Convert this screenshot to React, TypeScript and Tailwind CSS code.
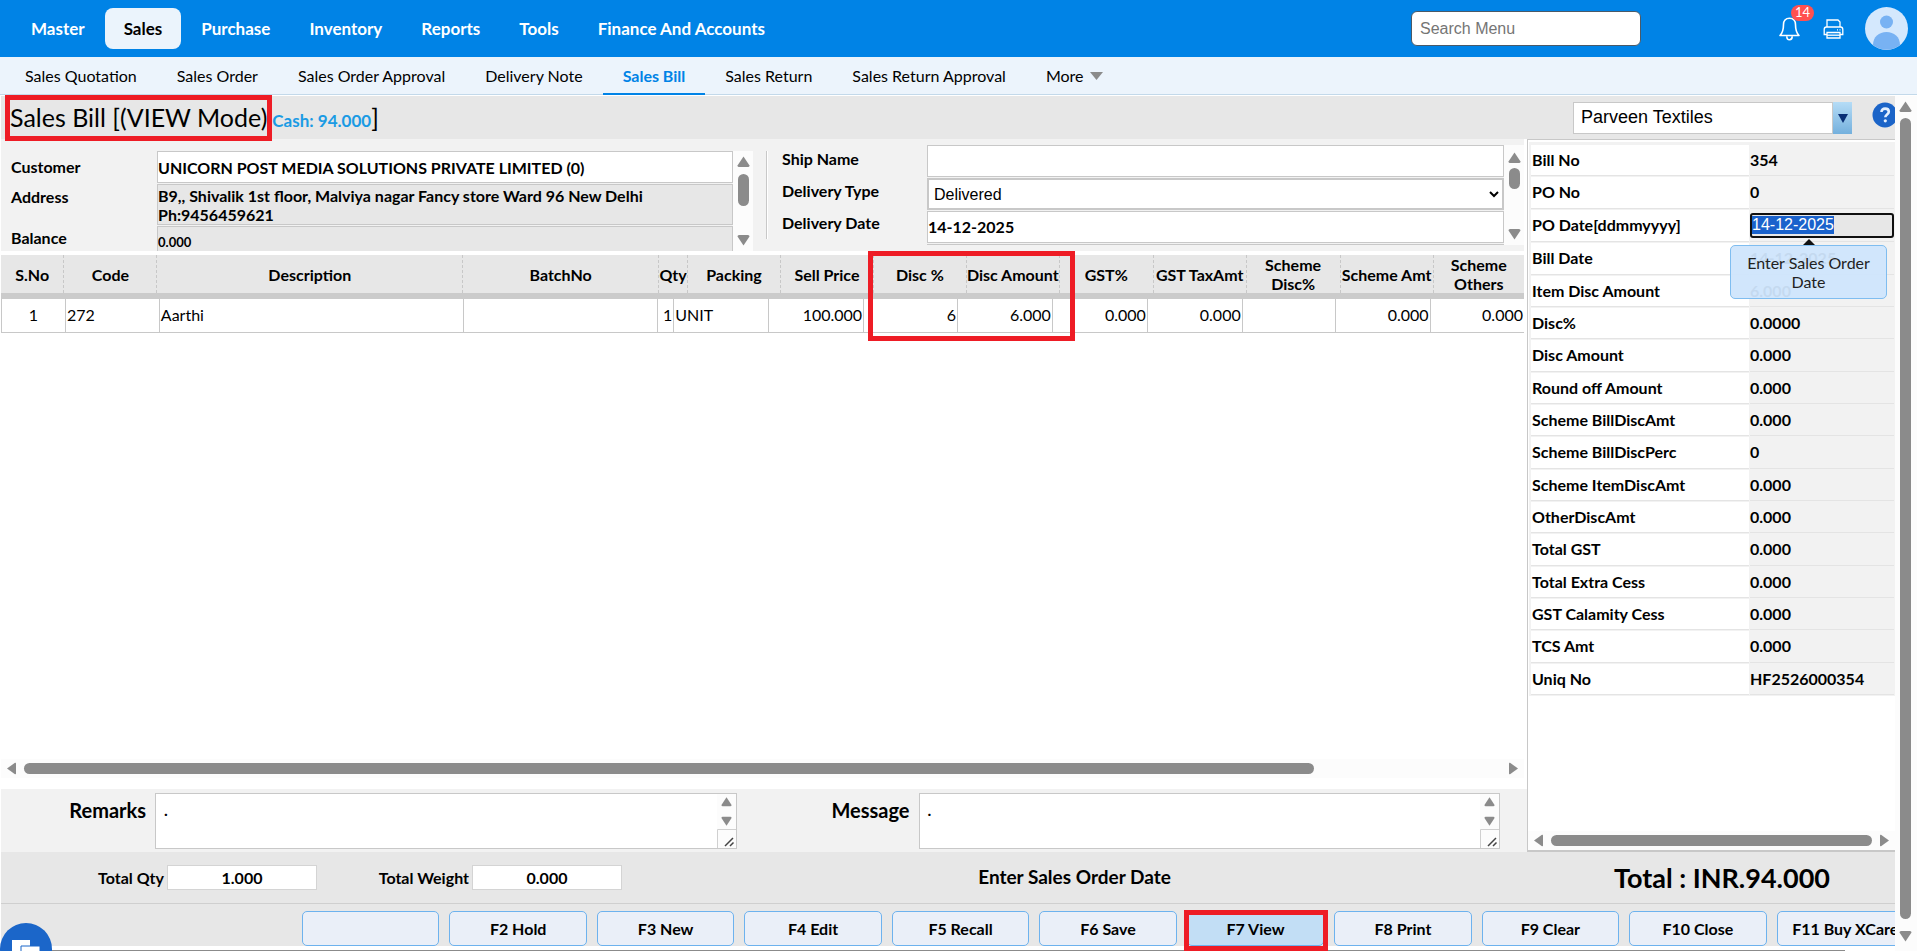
import { useEffect, useRef } from "react";
import clsx from "clsx";

interface Column {
  title: string;
  value: string;
  head: number;
  cell: number;
  align: string;
}

const menus = ["Master", "Sales", "Purchase", "Inventory", "Reports", "Tools", "Finance And Accounts"];

const subMenus = [
  "Sales Quotation",
  "Sales Order",
  "Sales Order Approval",
  "Delivery Note",
  "Sales Bill",
  "Sales Return",
  "Sales Return Approval"
];

// head and cell are relative widths, the header and the rows are sized apart
const columns: Column[] = [
  { title: "S.No", value: "1", head: 63, cell: 64, align: "text-center" },
  { title: "Code", value: "272", head: 93, cell: 94, align: "text-left" },
  { title: "Description", value: "Aarthi", head: 306, cell: 304, align: "text-left" },
  { title: "BatchNo", value: "", head: 196, cell: 195, align: "text-left" },
  { title: "Qty", value: "1", head: 29, cell: 16, align: "text-right" },
  { title: "Packing", value: "UNIT", head: 93, cell: 95, align: "text-left" },
  { title: "Sell Price", value: "100.000", head: 93, cell: 95, align: "text-right" },
  { title: "Disc %", value: "6", head: 93, cell: 94, align: "text-right" },
  { title: "Disc Amount", value: "6.000", head: 93, cell: 95, align: "text-right" },
  { title: "GST%", value: "0.000", head: 94, cell: 95, align: "text-right" },
  { title: "GST TaxAmt", value: "0.000", head: 93, cell: 95, align: "text-right" },
  { title: "Scheme Disc%", value: "", head: 94, cell: 93, align: "text-right" },
  { title: "Scheme Amt", value: "0.000", head: 93, cell: 95, align: "text-right" },
  { title: "Scheme Others", value: "0.000", head: 91, cell: 94, align: "text-right" }
];

const summary = [
  ["Bill No", "354"],
  ["PO No", "0"],
  ["PO Date[ddmmyyyy]", "14-12-2025"],
  ["Bill Date", "14-12-2025"],
  ["Item Disc Amount", "6.000"],
  ["Disc%", "0.0000"],
  ["Disc Amount", "0.000"],
  ["Round off Amount", "0.000"],
  ["Scheme BillDiscAmt", "0.000"],
  ["Scheme BillDiscPerc", "0"],
  ["Scheme ItemDiscAmt", "0.000"],
  ["OtherDiscAmt", "0.000"],
  ["Total GST", "0.000"],
  ["Total Extra Cess", "0.000"],
  ["GST Calamity Cess", "0.000"],
  ["TCS Amt", "0.000"],
  ["Uniq No", "HF2526000354"]
];

const actions = [
  "",
  "F2 Hold",
  "F3 New",
  "F4 Edit",
  "F5 Recall",
  "F6 Save",
  "F7 View",
  "F8 Print",
  "F9 Clear",
  "F10 Close",
  "F11 Buy XCare"
];

function Arrow({ dir, size = 13 }: { dir: "up" | "down" | "left" | "right"; size?: number }) {
  const paths = {
    up: "M6.5 1.5 12.5 10.5Q12.5 12 11 12H2Q.5 12 .5 10.5Z",
    down: "M6.5 11.5 12.5 2.5Q12.5 1 11 1H2Q.5 1 .5 2.5Z",
    left: "M2 6.5 10 .8Q11 .5 11 1.5V11.5Q11 12.5 10 12.2Z",
    right: "M11 6.5 3 .8Q2 .5 2 1.5V11.5Q2 12.5 3 12.2Z"
  };
  return (
    <svg width={size} height={size} viewBox="0 0 13 13" className="shrink-0 text-[#8b8b8b]">
      <path d={paths[dir]} fill="currentColor" />
    </svg>
  );
}

function HelpIcon() {
  return (
    <svg width="26" height="26" viewBox="0 0 26 26" className="shrink-0">
      <circle cx="13" cy="13" r="12.5" fill="#1b64c8" />
      <path
        d="M9.5 10c0-2.2 1.500-3.400 3.600-3.400 2.200 0 3.700 1.200 3.700 3.100 0 2.700-3.500 2.800-3.500 5.600"
        fill="none"
        stroke="#e4f0ff"
        strokeWidth="2.6"
      />
      <circle cx="13.3" cy="18.800" r="1.6" fill="#e4f0ff" />
    </svg>
  );
}

function TopBar() {
  return (
    <header className="flex h-[57px] shrink-0 items-center bg-[#0083e6] pl-3 pr-[9px]">
      <nav className="flex flex-1 gap-px">
        {menus.map((menu) => (
          <a
            key={menu}
            href="#"
            className={clsx(
              "flex h-[41px] items-center rounded-lg px-[19px] text-[17px] font-bold",
              menu === "Sales" ? "bg-[#ebf4fc] text-black" : "text-white"
            )}
          >
            {menu}
          </a>
        ))}
      </nav>
      <input
        type="text"
        placeholder="Search Menu"
        aria-label="Search Menu"
        className="mr-[138px] h-[35px] w-[230px] rounded-md border border-[#4a5a68] bg-white px-2 font-[Liberation_Sans,Arial,sans-serif] text-base placeholder:text-[#757575]"
      />
      <button type="button" aria-label="Notifications" className="relative">
        <svg width="21" height="24" viewBox="0 0 21 24" fill="none" stroke="#fff" strokeWidth="1.6">
          <path d="M10.5 1.2c-4 0-6 3-6 6.3 0 6-1 8.500-3.500 11h19c-2.500-2.500-3.500-5-3.500-11 0-3.300-2-6.300-6-6.300Z" strokeLinejoin="round" />
          <path d="M7.800 19.200c0 4.800 5.400 4.800 5.400 0" />
        </svg>
        <span className="absolute -top-3 left-3 flex h-4 w-[23px] items-center justify-center rounded-lg bg-[#ff5050] text-[13px] text-white">
          14
        </span>
      </button>
      <button type="button" aria-label="Print" className="ml-[23px] mr-[21px]">
        <svg width="21" height="20" viewBox="0 0 21 20" fill="none" stroke="#fff" strokeWidth="1.3">
          <path d="M4 8V1h11l2 2v5" />
          <path d="M4 15.500H1.200V10.500Q1.200 8 3.500 8h14q2.300 0 2.300 2.500v5H17" />
          <path d="M4 13.500h13v5.500H4zM14 10.800h1M16.500 10.800h1" />
          <path d="M4 16.200h13" />
        </svg>
      </button>
      <button type="button" aria-label="Profile">
        <svg width="43" height="43" viewBox="0 0 43 43">
          <circle cx="21.500" cy="21.500" r="21.500" fill="#d4e8fd" />
          <circle cx="21.500" cy="15" r="6.500" fill="#78b2f3" />
          <path d="M8 38c0-8 6-13 13.500-13S35 30 35 38a21.500 21.500 0 0 1-27 0Z" fill="#78b2f3" />
        </svg>
      </button>
    </header>
  );
}

function SubMenu() {
  return (
    <nav className="mb-px flex h-[38px] shrink-0 border-b border-[#c3d9ea] bg-[#ecf4fc] pl-[5px] text-base">
      {subMenus.map((menu) => (
        <a
          key={menu}
          href="#"
          className={clsx(
            "flex items-center px-5",
            menu === "Sales Bill" && "-mb-px border-b-2 border-[#0083e6] pt-px font-bold text-[#0083e6]"
          )}
        >
          {menu}
        </a>
      ))}
      <button type="button" className="flex items-center gap-1.5 px-5">
        More
        <svg width="13" height="8" viewBox="0 0 13 8">
          <path d="M0 0h13L6.500 8z" fill="#8b8b8b" />
        </svg>
      </button>
    </nav>
  );
}

function TitleBar() {
  return (
    <div className="flex h-[43px] shrink-0 items-center overflow-x-clip bg-[#e7e7e7]">
      <h1 className="flex flex-1 items-center text-[25px]">
        <span className="relative ml-1 flex h-[46px] items-center border-[5px] border-[#ee1c25]">
          Sales Bill [(VIEW Mode)
        </span>
        <span className="pt-1.5 text-[17px] font-bold text-[#1b9be4]">Cash: 94.000</span>
        <span>]</span>
      </h1>
      <div className="mr-5 flex h-8 w-[279px]">
        <select
          aria-label="Company"
          className="flex-1 appearance-none border border-[#c8c8c8] bg-white px-[7px] pb-0.5 font-[Liberation_Sans,Arial,sans-serif] text-lg"
        >
          <option>Parveen Textiles</option>
        </select>
        <button
          type="button"
          aria-label="Choose company"
          className="flex w-[19px] items-center justify-center bg-linear-to-b from-[#b5dcf6] to-[#74b0dd] pt-0.5"
        >
          <svg width="10" height="9" viewBox="0 0 10 9">
            <path d="M0 0h10L5 9z" fill="#082e75" />
          </svg>
        </button>
      </div>
      <button type="button" aria-label="Help" className="-mr-[3px] mb-1.5">
        <HelpIcon />
      </button>
    </div>
  );
}

function BillForm() {
  return (
    <section className="mr-[3px] grid h-28 shrink-0 grid-cols-[767fr_756fr] overflow-hidden bg-[#f2f2f2] font-bold">
      <div className="mt-3 flex overflow-hidden">
        <div className="grid flex-1 grid-cols-[156px_1fr] content-start gap-y-px text-base">
          <label htmlFor="customer" className="pl-2.5 pt-1">
            Customer
          </label>
          <input
            id="customer"
            defaultValue="UNICORN POST MEDIA SOLUTIONS PRIVATE LIMITED (0)"
            className="h-8 border border-[#c8c8c8] bg-white"
          />
          <label htmlFor="address" className="pl-2.5 pt-px">
            Address
          </label>
          <textarea
            id="address"
            readOnly
            defaultValue={"B9,, Shivalik 1st floor, Malviya nagar Fancy store Ward 96 New Delhi\nPh:9456459621"}
            className="h-[41px] resize-none overflow-hidden border border-[#c8c8c8] bg-[#e7e7e7] pt-px leading-[19px]"
          />
          <label htmlFor="balance" className="pl-2.5">
            Balance
          </label>
          <input
            id="balance"
            readOnly
            defaultValue="0.000"
            className="h-8 border border-[#c8c8c8] bg-[#e7e7e7] text-[13px]"
          />
        </div>
        <div className="flex w-5 flex-col items-center bg-[#fcfcfc] pb-1 pt-1">
          <Arrow dir="up" />
          <div className="mt-1.5 h-8 w-[11px] rounded-full bg-[#8b8b8b]" />
          <span className="flex-1" />
          <Arrow dir="down" />
        </div>
        <div className="mb-3 ml-[13px] w-0.5 border-x border-l-[#c8c8c8] border-r-white" />
      </div>
      <div className="mb-1.5 mt-1.5 flex overflow-hidden">
        <div className="grid flex-1 grid-cols-[159px_1fr] content-start gap-y-px text-base">
          <label htmlFor="ship" className="pl-3.5 pt-0.5">
            Ship Name
          </label>
          <input id="ship" className="h-8 border border-[#c8c8c8] bg-white" />
          <label htmlFor="delivery-type" className="pl-3.5 pt-px">
            Delivery Type
          </label>
          <select
            id="delivery-type"
            className="h-8 border-2 border-[#c8c8c8] bg-white pl-px font-[Liberation_Sans,Arial,sans-serif] font-normal"
          >
            <option>Delivered</option>
          </select>
          <label htmlFor="delivery-date" className="pl-3.5">
            Delivery Date
          </label>
          <input id="delivery-date" defaultValue="14-12-2025" className="h-8 border border-[#c8c8c8] bg-white pb-0.5" />
          <span />
          <input aria-label="Delivery note" className="h-8 border border-[#c8c8c8] bg-white" />
        </div>
        <div className="flex w-5 flex-col items-center bg-[#fcfcfc] pb-1 pt-1.5">
          <Arrow dir="up" />
          <div className="mt-1 h-[21px] w-[11px] rounded-full bg-[#8b8b8b]" />
          <span className="flex-1" />
          <Arrow dir="down" />
        </div>
      </div>
    </section>
  );
}

function ItemGrid() {
  return (
    <section className="relative mr-[3px] mt-1 flex flex-1 flex-col">
      <table className="w-full table-fixed border-b-[6px] border-[#cbcbcb] bg-[#e7e7e7] text-base leading-[19px]">
        <colgroup>
          {columns.map((col) => (
            <col key={col.title} style={{ width: `${(col.head / 1524) * 100}%` }} />
          ))}
        </colgroup>
        <thead>
          <tr className="h-[38px]">
            {columns.map((col) => (
              <th
                key={col.title}
                className={clsx(
                  "border-r border-dashed border-[#c8c8c8] py-0 text-center font-bold last:border-r-0",
                  !col.title.startsWith("Scheme ") || col.title === "Scheme Amt" ? "whitespace-nowrap px-0" : "px-3"
                )}
              >
                {col.title}
              </th>
            ))}
          </tr>
        </thead>
      </table>
      <table className="w-full table-fixed border-l border-[#c8c8c8] text-base">
        <colgroup>
          {columns.map((col) => (
            <col key={col.title} style={{ width: `${(col.cell / 1524) * 100}%` }} />
          ))}
        </colgroup>
        <tbody>
          <tr className="h-[33px]">
            {columns.map((col) => (
              <td
                key={col.title}
                className={clsx("border-b border-r border-[#c8c8c8] px-px last:border-r-0", col.align)}
              >
                {col.value}
              </td>
            ))}
          </tr>
        </tbody>
      </table>
      <div className="absolute -top-1 left-[867px] h-[90px] w-[207px] border-[5px] border-[#ee1c25]" />
      <div className="mb-[11px] mt-auto flex h-[19px] items-center bg-[#fcfcfc] px-1">
        <Arrow dir="left" />
        <div className="ml-1.5 mr-[193px] h-[11px] flex-1 rounded-full bg-[#8b8b8b]" />
        <Arrow dir="right" />
      </div>
    </section>
  );
}

function NoteBox({ id, label }: { id: string; label: string }) {
  return (
    <div className="flex flex-1">
      <label htmlFor={id} className="w-[154px] pr-[9px] pt-[5px] text-right text-xl leading-6 font-bold">
        {label}
      </label>
      <div className="flex h-14 flex-1 border border-[#c8c8c8] bg-white">
        <textarea
          id={id}
          defaultValue="."
          className="flex-1 resize-none overflow-hidden px-2 py-1 text-base font-bold"
        />
        <div className="flex w-[19px] flex-col items-center bg-[#fcfcfc]">
          <span className="flex flex-1 flex-col justify-between py-0.5">
            <Arrow dir="up" size={11} />
            <Arrow dir="down" size={11} />
          </span>
          <svg width="19" height="19" viewBox="0 0 19 19" fill="none">
            <path d="M.5 19V.500H19" stroke="#d0d0d0" />
            <path d="M8 17l8-8M13 17l3.500-3.500" stroke="#444" strokeWidth="1.500" />
          </svg>
        </div>
      </div>
    </div>
  );
}

function SummaryPanel() {
  const dateRef = useRef<HTMLInputElement>(null);

  useEffect(() => {
    dateRef.current?.focus();
    dateRef.current?.select();
  }, []);

  return (
    <aside className="flex w-[368px] shrink-0 flex-col overflow-hidden border-b-2 border-l border-t border-[#c8c8c8] bg-white">
      <div className="ml-px mt-0.5 bg-[#f2f2f2] pl-px pt-0.5">
        <table className="h-[552px] w-full border-separate border-spacing-x-px border-spacing-y-px text-base font-bold">
          <tbody>
            {summary.map(([label, value], index) => (
              <tr key={label}>
                <th scope="row" className="w-[218px] border-b border-[#e4e4e4] bg-white p-0 pl-px text-left font-bold">
                  {label}
                </th>
                <td className="border-b border-[#e4e4e4] p-0">
                  {index === 2 ? (
                    <div className="relative flex">
                      <input
                        ref={dateRef}
                        aria-label={label}
                        defaultValue={value}
                        className="h-[25px] w-full rounded-[3px] border-2 border-[#101010] bg-[#e7e7e7] font-[Liberation_Sans,Arial,sans-serif] font-normal outline-none selection:bg-[#1a62cc] selection:text-white"
                      />
                      <div className="absolute -left-5 top-[26px] flex w-[157px] flex-col items-center">
                        <svg width="12" height="6" viewBox="0 0 12 6">
                          <path d="M6 0l6 6H0z" fill="#111" />
                        </svg>
                        <div
                          role="tooltip"
                          className="w-full rounded-[5px] border border-[#7fbdf0] bg-[#cfe5fc]/95 px-2 py-[7px] text-center font-normal leading-[19px] text-[#222]"
                        >
                          Enter Sales Order Date
                        </div>
                      </div>
                    </div>
                  ) : (
                    value
                  )}
                </td>
              </tr>
            ))}
          </tbody>
        </table>
      </div>
      <div className="mt-auto flex h-[19px] items-center bg-[#fcfcfc] px-1">
        <Arrow dir="left" />
        <div className="mx-1.5 h-[11px] flex-1 rounded-full bg-[#8b8b8b]" />
        <Arrow dir="right" />
      </div>
    </aside>
  );
}

function Totals() {
  return (
    <div className="flex h-[52px] shrink-0 items-center border-b border-[#cfcfcf] bg-[#e7e7e7] text-base font-bold">
      <label htmlFor="total-qty" className="w-[166px] pr-[3px] text-right">
        Total Qty
      </label>
      <input
        id="total-qty"
        readOnly
        defaultValue="1.000"
        className="h-[25px] w-[150px] border border-[#d4d4d4] bg-white text-center"
      />
      <label htmlFor="total-weight" className="w-[155px] pr-[3px] text-right">
        Total Weight
      </label>
      <input
        id="total-weight"
        readOnly
        defaultValue="0.000"
        className="h-[25px] w-[150px] border border-[#d4d4d4] bg-white text-center"
      />
      <p className="flex-1 pr-[22px] text-center text-[19px]">Enter Sales Order Date</p>
      <p className="w-[346px] pt-0.5 text-center text-[27px]">Total : INR.94.000</p>
    </div>
  );
}

function ActionBar() {
  return (
    <div className="flex h-[42px] shrink-0 overflow-hidden bg-[#e7e7e7] pl-[301px] pt-[7px]">
      <div className="-mr-[19px] flex flex-1 gap-2.5">
        {actions.map((label) => (
          <button
            key={label}
            type="button"
            className={clsx(
              "h-[35px] flex-1 basis-0 whitespace-nowrap rounded-[5px] border border-[#6db2ee] text-base font-bold",
              label === "F7 View" ? "bg-[#c2def5]" : "bg-[#eaeff8]"
            )}
          >
            {label}
          </button>
        ))}
      </div>
    </div>
  );
}

export default function App() {
  return (
    <div className="relative flex h-screen flex-col overflow-hidden bg-white font-[Lato,sans-serif] text-black">
      <TopBar />
      <SubMenu />
      <main className="flex min-h-0 flex-1">
        <div className="flex min-w-0 flex-1 flex-col pl-px">
          <TitleBar />
          <div className="flex min-h-0 flex-1">
            <div className="flex min-w-0 flex-1 flex-col">
              <BillForm />
              <ItemGrid />
              <div className="flex h-[63px] shrink-0 gap-7 bg-[#f2f2f2] pr-[27px] pt-1">
                <NoteBox id="remarks" label="Remarks" />
                <NoteBox id="message" label="Message" />
              </div>
            </div>
            <SummaryPanel />
          </div>
          <Totals />
          <ActionBar />
          <div className="flex h-[5px] shrink-0 items-end pr-[50px]">
            <div className="h-px flex-1 bg-[#8b8b8b]" />
          </div>
        </div>
        <div className="flex w-[22px] flex-col items-center bg-[#fcfcfc] pb-2 pr-3 pl-2.5 pt-1">
          <Arrow dir="up" />
          <div className="mb-[11px] mt-[5px] w-[11px] flex-1 rounded-full bg-[#8b8b8b]" />
          <Arrow dir="down" />
        </div>
      </main>
      <div className="absolute bottom-0 left-[1184px] h-[41px] w-36 border-[5px] border-[#ee1c25]" />
      <button type="button" aria-label="Chat" className="absolute -bottom-6 left-0">
        <svg width="52" height="52" viewBox="0 0 52 52">
          <circle cx="26" cy="26" r="26" fill="#1b66c9" />
          <path d="M12 17h18v14H18l-6 5z" fill="#fff" />
          <path d="M21 23h19v16l-5-3H21z" fill="#fff" stroke="#1b66c9" />
        </svg>
      </button>
    </div>
  );
}
